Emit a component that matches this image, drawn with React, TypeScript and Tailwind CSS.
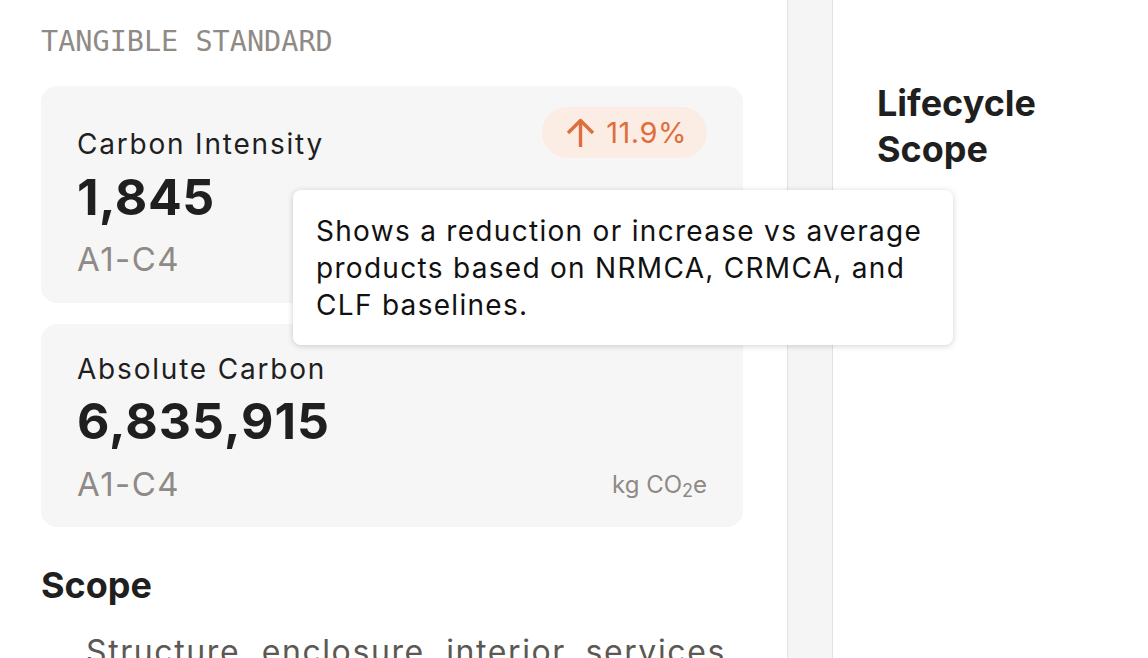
export default function App() {
  return (
    <div className="relative flex h-[658px] w-[1148px] overflow-hidden bg-white font-[Inter,sans-serif] text-[#1f1f1f]">
      {/* left panel */}
      <div className="w-[787px] shrink-0 pl-[41px] pr-[44px] pt-[28px]">
        <div className="font-['DejaVu_Sans_Mono',monospace] text-[28.5px] leading-none text-[#8f8a85]">TANGIBLE STANDARD</div>

        <div className="mt-[29px] rounded-[16px] bg-[#f6f6f6] px-9 pt-[21px] pb-[27px]">
          <div className="flex items-start justify-between">
            <div className="mt-[20px] text-[28px] leading-[34px] tracking-[1.8px]">Carbon Intensity</div>
            <div className="flex h-[51px] items-center gap-[11px] rounded-full bg-[#fbece4] pl-[24px] pr-[20px] text-[#df6e3d]">
              <svg width="29" height="29" viewBox="0 0 29 29" fill="none" stroke="currentColor" strokeWidth="3.4" strokeLinejoin="round">
                <path d="M14.5 29V2.5" />
                <path d="M2 15L14.5 2.5L27 15" />
              </svg>
              <span className="text-[29px] leading-none tracking-[0.5px]">11.9%</span>
            </div>
          </div>
          <div className="mt-[11px] text-[50px] font-bold leading-none tracking-[0.5px]">1,845</div>
          <div className="mt-[21px] text-[33px] leading-none tracking-[1.5px] text-[#8f8a85]">A1-C4</div>
        </div>

        <div className="mt-[21px] rounded-[16px] bg-[#f6f6f6] px-9 pt-[28px] pb-[26px]">
          <div className="text-[28px] leading-[34px] tracking-[1.8px]">Absolute Carbon</div>
          <div className="mt-[10px] text-[50px] font-bold leading-none tracking-[1px]">6,835,915</div>
          <div className="mt-[22px] flex items-end justify-between">
            <div className="text-[33px] leading-none tracking-[1.5px] text-[#8f8a85]">A1-C4</div>
            <div className="mb-[4px] text-[24px] leading-none text-[#8f8a85]">
              kg CO<sub className="text-[18px]">2</sub>e
            </div>
          </div>
        </div>

        <h2 className="mt-[40px] text-[36px] font-bold leading-none">Scope</h2>
        <p className="mt-[33px] whitespace-nowrap pl-[45px] text-[32px] leading-none tracking-[1.6px] text-[#5c5853]">Structure, enclosure, interior, services</p>
      </div>

      {/* divider strip */}
      <div className="w-[46px] shrink-0 border-x border-[#e4e2db] bg-[#f5f5f5]" />

      {/* right panel */}
      <div className="flex-1 pl-[44px] pt-[80px]">
        <h2 className="text-[36px] font-bold leading-[46px]">
          Lifecycle
          <br />
          Scope
        </h2>
      </div>

      {/* tooltip */}
      <div className="absolute left-[293px] top-[190px] w-[660px] rounded-[8px] bg-white px-[23px] pt-[23px] pb-[21px] text-[28px] leading-[37px] tracking-[1.3px] text-[#111] shadow-[0_1px_6px_rgba(0,0,0,0.18)]">
        Shows a reduction or increase vs average products based on NRMCA, CRMCA, and CLF baselines.
      </div>
    </div>
  );
}
